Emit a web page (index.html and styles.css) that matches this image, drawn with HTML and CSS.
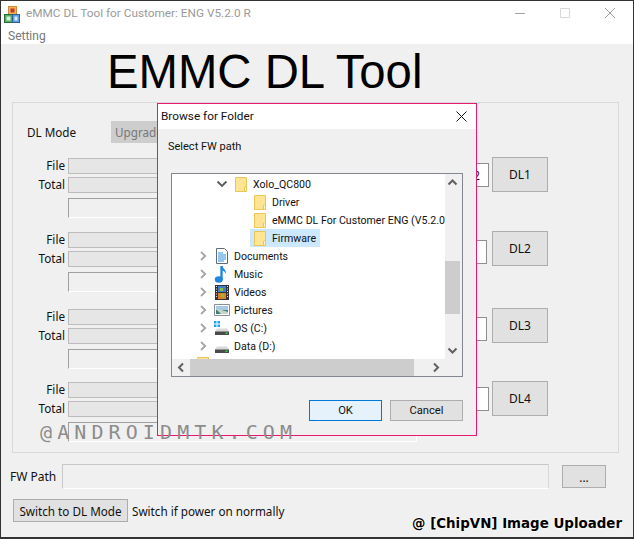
FILE: index.html
```html
<!DOCTYPE html>
<html lang="en">
<head>
<meta charset="utf-8">
<title>eMMC DL Tool</title>
<link rel="stylesheet" href="styles.css">
</head>
<body>
<svg class="defs" width="0" height="0" aria-hidden="true">
  <defs>
    <symbol id="folder" viewBox="0 0 16 16">
      <path d="M2.5 1.5h11v14h-11z" fill="#ffe593" stroke="#eac558"/>
      <path d="M11.5 15v-4h2.5" fill="none" stroke="#eac558"/>
      <path d="M12 11.5h1v3h-1z" fill="#fff6d0"/>
    </symbol>
    <symbol id="chev-right" viewBox="0 0 12 12">
      <path d="M4 2l4.2 4L4 10" fill="none" stroke="#a6a6a6" stroke-width="1.8"/>
    </symbol>
    <symbol id="chev-down" viewBox="0 0 12 12">
      <path d="M1.5 3.5L6 8l4.5-4.5" fill="none" stroke="#595959" stroke-width="1.8"/>
    </symbol>
    <symbol id="drive" viewBox="0 0 16 16">
      <path d="M3 8.500h10l2 3v3H1v-3z" fill="#d9d9d9"/>
      <path d="M1 11.500h14v3.500H1z" fill="#4a4a4a"/>
      <path d="M11.500 12.500h2V14h-2z" fill="#35d04a"/>
    </symbol>
  </defs>
</svg>
<div class="window">
  <header class="titlebar">
    <svg class="app-icon" width="16" height="17" viewBox="0 0 16 17" aria-hidden="true">
      <rect x="4.500" y="0.500" width="8" height="8" fill="#f2b25a" stroke="#c98a3a"/>
      <rect x="6.500" y="2.500" width="4" height="4" fill="#c0392b"/>
      <rect x="0.500" y="8.500" width="8" height="8" fill="#4fae5b" stroke="#2c6b39"/>
      <rect x="2.500" y="10.500" width="4" height="4" fill="#d8f0dc"/>
      <rect x="8.500" y="8.500" width="7" height="8" fill="#5c9ee0" stroke="#2d5f94"/>
      <rect x="10.500" y="10.500" width="3" height="4" fill="#d9e9fa"/>
    </svg>
    <span class="title-text">eMMC DL Tool for Customer: ENG V5.2.0 R</span>
    <div class="caption-buttons">
      <svg width="10" height="10" viewBox="0 0 10 10" aria-hidden="true"><path d="M0 5.500h10" stroke="#a0a0a0"/></svg>
      <svg width="10" height="10" viewBox="0 0 10 10" aria-hidden="true"><path d="M.5.5h9v9h-9z" fill="none" stroke="#d8d8d8"/></svg>
      <svg width="10" height="10" viewBox="0 0 10 10" aria-hidden="true"><path d="M0 0l10 10M10 0L0 10" stroke="#a0a0a0"/></svg>
    </div>
  </header>
  <nav class="menubar"><span>Setting</span></nav>
  <h1 class="app-heading">EMMC DL Tool</h1>

  <section class="group">
    <div class="mode-row">
      <span class="mode-label">DL Mode</span>
      <div class="mode-select">Upgrade</div>
    </div>

    <div class="channel channel-1">
      <div class="channel-main">
        <div class="bar-row"><span class="bar-label">File</span><div class="bar"></div></div>
        <div class="bar-row"><span class="bar-label">Total</span><div class="bar"></div></div>
        <div class="status-box"></div>
      </div>
      <div class="port-box">2</div>
      <button class="dl-button">DL1</button>
    </div>

    <div class="channel channel-2">
      <div class="channel-main">
        <div class="bar-row"><span class="bar-label">File</span><div class="bar"></div></div>
        <div class="bar-row"><span class="bar-label">Total</span><div class="bar"></div></div>
        <div class="status-box"></div>
      </div>
      <div class="port-box port-box-low"></div>
      <button class="dl-button">DL2</button>
    </div>

    <div class="channel channel-3">
      <div class="channel-main">
        <div class="bar-row"><span class="bar-label">File</span><div class="bar"></div></div>
        <div class="bar-row"><span class="bar-label">Total</span><div class="bar"></div></div>
        <div class="status-box"></div>
      </div>
      <div class="port-box port-box-low"></div>
      <button class="dl-button">DL3</button>
    </div>

    <div class="channel channel-4">
      <div class="channel-main">
        <div class="bar-row"><span class="bar-label">File</span><div class="bar"></div></div>
        <div class="bar-row"><span class="bar-label">Total</span><div class="bar"></div></div>
        <div class="status-box"></div>
      </div>
      <div class="port-box"></div>
      <button class="dl-button">DL4</button>
    </div>
  </section>

  <div class="path-row">
    <span class="path-label">FW Path</span>
    <div class="path-input"></div>
    <button class="browse-button">...</button>
  </div>

  <div class="switch-row">
    <button class="switch-button">Switch to DL Mode</button>
    <span>Switch if power on normally</span>
  </div>

  <div class="dialog">
    <div class="dialog-title">
      <span class="dialog-title-text">Browse for Folder</span>
      <svg width="11" height="11" viewBox="0 0 11 11" aria-hidden="true"><path d="M.5.5l10 10M10.500.5l-10 10" stroke="#111"/></svg>
    </div>
    <div class="dialog-body">
      <p class="dialog-prompt">Select FW path</p>
      <div class="tree-frame">
        <div class="tree">
          <div class="tree-row depth-1">
            <svg class="chev" aria-hidden="true"><use href="#chev-down"/></svg>
            <svg class="icon" aria-hidden="true"><use href="#folder"/></svg>
            <span class="tree-text">Xolo_QC800</span>
          </div>
          <div class="tree-row depth-2"><div class="node"><svg class="icon" aria-hidden="true"><use href="#folder"/></svg><span class="tree-text">Driver</span></div></div>
          <div class="tree-row depth-2"><div class="node"><svg class="icon" aria-hidden="true"><use href="#folder"/></svg><span class="tree-text">eMMC DL For Customer ENG (V5.2.0 R)</span></div></div>
          <div class="tree-row depth-2"><div class="node node-selected"><svg class="icon" aria-hidden="true"><use href="#folder"/></svg><span class="tree-text">Firmware</span></div></div>
          <div class="tree-row depth-0">
            <svg class="chev" aria-hidden="true"><use href="#chev-right"/></svg>
            <svg class="icon" viewBox="0 0 16 16" aria-hidden="true">
              <path d="M2.500.5h8l3 3v12h-11z" fill="#fff" stroke="#5f6b78"/>
              <path d="M4 5h5M4 7h8M4 9h8M4 11h8M4 13h6" stroke="#2b8fe0"/>
            </svg>
            <span class="tree-text">Documents</span>
          </div>
          <div class="tree-row depth-0">
            <svg class="chev" aria-hidden="true"><use href="#chev-right"/></svg>
            <svg class="icon icon-tall" viewBox="0 0 16 18" aria-hidden="true">
              <path d="M7.500 1v14" stroke="#1e88e0" stroke-width="2.400"/>
              <ellipse cx="4.800" cy="14.500" rx="4" ry="3.200" fill="#1e88e0"/>
              <path d="M8 0c.5 3.500 4.500 4.500 4 9-1-2.500-2.500-3.300-4-3.800z" fill="#1e88e0"/>
            </svg>
            <span class="tree-text">Music</span>
          </div>
          <div class="tree-row depth-0">
            <svg class="chev" aria-hidden="true"><use href="#chev-right"/></svg>
            <svg class="icon" viewBox="0 0 16 16" aria-hidden="true">
              <path d="M1 1h14v15H1z" fill="#333"/>
              <path d="M4 2h8v6H4z" fill="#3f7fd0"/>
              <path d="M4 9h8v6H4z" fill="#d9822b"/>
              <path d="M6 4h3v3H6zM7 10h3v3H7z" fill="#8cbf3f"/>
              <path d="M2 2.500h1M2 5h1M2 7.500h1M2 10h1M2 12.500h1M13 2.500h1M13 5h1M13 7.500h1M13 10h1M13 12.500h1" stroke="#ddd"/>
            </svg>
            <span class="tree-text">Videos</span>
          </div>
          <div class="tree-row depth-0">
            <svg class="chev" aria-hidden="true"><use href="#chev-right"/></svg>
            <svg class="icon" viewBox="0 0 16 16" aria-hidden="true">
              <path d="M.5 2.500h15v11H.5z" fill="#fff" stroke="#8a8f96"/>
              <path d="M2 4h12v4H2z" fill="#a7c8e6"/>
              <path d="M2 8h12v4H2z" fill="#3f7f78"/>
              <path d="M2 7c4 0 6 1 12 3v2H7z" fill="#c5d6c8"/>
            </svg>
            <span class="tree-text">Pictures</span>
          </div>
          <div class="tree-row depth-0">
            <svg class="chev" aria-hidden="true"><use href="#chev-right"/></svg>
            <svg class="icon" viewBox="0 0 16 16" aria-hidden="true">
              <use href="#drive"/>
              <path d="M0 1h2.500v2.500H0zM3.500 1H6v2.500H3.500zM0 4.500h2.500V7H0zM3.500 4.500H6V7H3.500z" fill="#19a5f0"/>
            </svg>
            <span class="tree-text">OS (C:)</span>
          </div>
          <div class="tree-row depth-0">
            <svg class="chev" aria-hidden="true"><use href="#chev-right"/></svg>
            <svg class="icon" aria-hidden="true"><use href="#drive"/></svg>
            <span class="tree-text">Data (D:)</span>
          </div>
          <div class="tree-row depth-root"><svg class="icon" aria-hidden="true"><use href="#folder"/></svg></div>
        </div>
        <div class="vscroll">
          <svg class="arrow" viewBox="0 0 15 17" aria-hidden="true"><path d="M3.500 10.500l4-4 4 4" fill="none" stroke="#606060" stroke-width="2"/></svg>
          <div class="vthumb"></div>
          <svg class="arrow arrow-end" viewBox="0 0 15 17" aria-hidden="true"><path d="M3.500 6.500l4 4 4-4" fill="none" stroke="#606060" stroke-width="2"/></svg>
        </div>
        <div class="hscroll">
          <svg class="harrow" viewBox="0 0 18 17" aria-hidden="true"><path d="M11 4.500l-4 4 4 4" fill="none" stroke="#606060" stroke-width="2"/></svg>
          <div class="hthumb"></div>
          <svg class="harrow harrow-end" viewBox="0 0 18 17" aria-hidden="true"><path d="M7 4.500l4 4-4 4" fill="none" stroke="#606060" stroke-width="2"/></svg>
        </div>
        <div class="corner"></div>
      </div>
      <div class="dialog-actions">
        <button class="dialog-button dialog-button-default">OK</button>
        <button class="dialog-button">Cancel</button>
      </div>
    </div>
  </div>

  <div class="mark-site">@ANDROIDMTK.COM</div>
  <div class="mark-uploader">@ [ChipVN] Image Uploader</div>
</div>
</body>
</html>
```

FILE: styles.css
```css
* { box-sizing: border-box; }
html, body { margin: 0; padding: 0; }
body { font: 11.7px/16px "Noto Sans", sans-serif; color: #111; background: #f0f0f0; }
.defs { position: absolute; }
button { font: inherit; color: inherit; padding: 0; }

.window {
  position: relative;
  width: 634px;
  height: 539px;
  overflow: hidden;
  background: #f0f0f0;
  border: 1px solid #333;
  border-width: 1px 1px 2px 1px;
}

.titlebar {
  display: flex;
  align-items: center;
  height: 23px;
  padding-left: 3px;
  background: #fff;
  color: #9a9a9a;
  font: 11.8px/16px Roboto, sans-serif;
}
.app-icon { margin-top: 3px; flex: none; }
.title-text { margin-left: 6px; }
.caption-buttons { display: flex; gap: 35px; margin-left: auto; margin-right: 18px; }

.menubar { height: 20px; padding: 4px 0 0 7px; background: #fff; color: #777; font: 12px/16px Roboto, sans-serif; }

.app-heading {
  height: 58px;
  margin: 0;
  padding-left: 106px;
  font: 400 47.3px/56px "Liberation Sans", sans-serif;
  color: #000;
}

.group {
  width: 607px;
  height: 351px;
  margin-left: 11px;
  padding-top: 18px;
  border: 1px solid #d9d9d9;
}
.mode-row { display: flex; align-items: center; height: 22px; padding-left: 14px; }
.mode-label { width: 84px; }
.mode-select { width: 120px; height: 22px; padding-left: 4px; line-height: 23px; background: #cdcdcd; color: #777; }

.channel { display: flex; height: 61px; }
.channel-1 { margin-top: 14px; }
.channel-2 { margin-top: 13px; }
.channel-3 { margin-top: 16px; }
.channel-4 { margin-top: 12px; }
.channel-main { flex: none; width: 407px; padding-top: 1px; }
.bar-row { display: flex; align-items: center; gap: 3px; height: 16px; margin-bottom: 3px; }
.bar-label { width: 52px; padding-bottom: 2px; text-align: right; }
.bar { width: 350px; height: 16px; background: #e6e6e6; border: 1px solid #bcbcbc; }
.status-box {
  width: 349px;
  height: 20px;
  margin: 5px 0 0 55px;
  border-top: 1px solid #a0a0a0;
  border-left: 1px solid #a0a0a0;
  border-bottom: 1px solid #fff;
  border-right: 1px solid #fff;
}
.port-box {
  flex: none;
  width: 69px;
  height: 24px;
  margin-top: 6px;
  padding-right: 8px;
  text-align: right;
  line-height: 22px;
  background: #fff;
  border: 1px solid #8f8f8f;
}
.port-box-low { width: 67px; margin: 9px 2px 0 0; }
.dl-button {
  flex: none;
  width: 56px;
  height: 35px;
  margin-left: 3px;
  background: #e1e1e1;
  border: 1px solid #adadad;
  font-size: 12px;
}

.path-row { display: flex; align-items: center; height: 25px; margin-top: 11px; padding-left: 9px; }
.path-label { width: 52px; font-size: 12px; }
.path-input { width: 487px; height: 25px; background: #f0f0f0; border: 1px solid #c8c8c8; border-right-color: #d8d8d8; border-bottom-color: #fff; }
.browse-button { width: 44px; height: 23px; margin-left: 13px; background: #e1e1e1; border: 1px solid #adadad; }

.switch-row { display: flex; align-items: center; height: 23px; margin-top: 10px; padding-left: 12px; gap: 4px; }
.switch-button { width: 115px; height: 23px; background: #e1e1e1; border: 1px solid #adadad; }

.dialog {
  position: absolute;
  left: 156px;
  top: 102px;
  width: 320px;
  height: 333px;
  display: flex;
  flex-direction: column;
  background: #f0f0f0;
  border: 1px solid #e6196e;
  font-family: Roboto, sans-serif;
}
.dialog-title {
  display: flex;
  align-items: center;
  justify-content: space-between;
  flex: none;
  height: 25px;
  padding: 0 9px 0 3px;
  background: #fff;
  font-size: 11.8px;
}
.dialog-title-text { padding-bottom: 2px; }
.dialog-body { flex: 1; padding: 0 13px 0 13px; }
.dialog-prompt { height: 44px; margin: 0 0 0 -3px; padding-top: 10px; font-size: 11px; }

.tree-frame {
  display: grid;
  grid-template-columns: 273px 17px;
  grid-template-rows: 185px 17px;
  width: 292px;
  height: 204px;
  background: #fff;
  border: 1px solid #828790;
}
.tree { padding-top: 1px; overflow: hidden; background: #fff; font-size: 10.6px; }
.tree-row { display: flex; align-items: center; height: 18px; white-space: nowrap; }
.tree-text { padding-top: 2px; }
.depth-0 { padding-left: 25px; }
.depth-1 { padding-left: 44px; }
.depth-2 { padding-left: 78px; }
.depth-root { padding-left: 23px; }
.chev { flex: none; width: 12px; height: 12px; margin-right: 5px; }
.icon { flex: none; width: 16px; height: 16px; margin-right: 4px; }
.icon-tall { height: 18px; }
.node { display: flex; align-items: center; height: 18px; padding: 0 4px 0 2px; }
.node-selected { background: #cce8ff; }

.vscroll { display: flex; flex-direction: column; background: #f0f0f0; }
.arrow { flex: none; width: 15px; height: 17px; }
.arrow-end { margin-top: auto; }
.vthumb { width: 15px; height: 53px; margin-top: 70px; background: #cdcdcd; }
.hscroll { display: flex; background: #f0f0f0; }
.harrow { flex: none; width: 18px; height: 17px; }
.harrow-end { margin-left: auto; }
.hthumb { width: 224px; background: #cdcdcd; }
.corner { background: #f0f0f0; }

.dialog-actions { display: flex; justify-content: flex-end; gap: 8px; margin-top: 23px; }
.dialog-button { width: 73px; height: 21px; background: #e1e1e1; border: 1px solid #adadad; font-size: 11.2px; line-height: 17px; }
.dialog-button-default { background: #e5f1fb; border-color: #0078d7; }

.mark-site {
  position: absolute;
  left: 39px;
  top: 419px;
  font: 20px/24px "DejaVu Sans Mono", monospace;
  letter-spacing: 5.1px;
  color: #8c8c8c;
  white-space: nowrap;
}
.mark-uploader {
  position: absolute;
  right: 11px;
  top: 515px;
  font: 700 13.4px/16px "DejaVu Sans", sans-serif;
  color: #000;
  white-space: nowrap;
  text-shadow: 0 0 2px #fff, 0 0 2px #fff;
}
```
